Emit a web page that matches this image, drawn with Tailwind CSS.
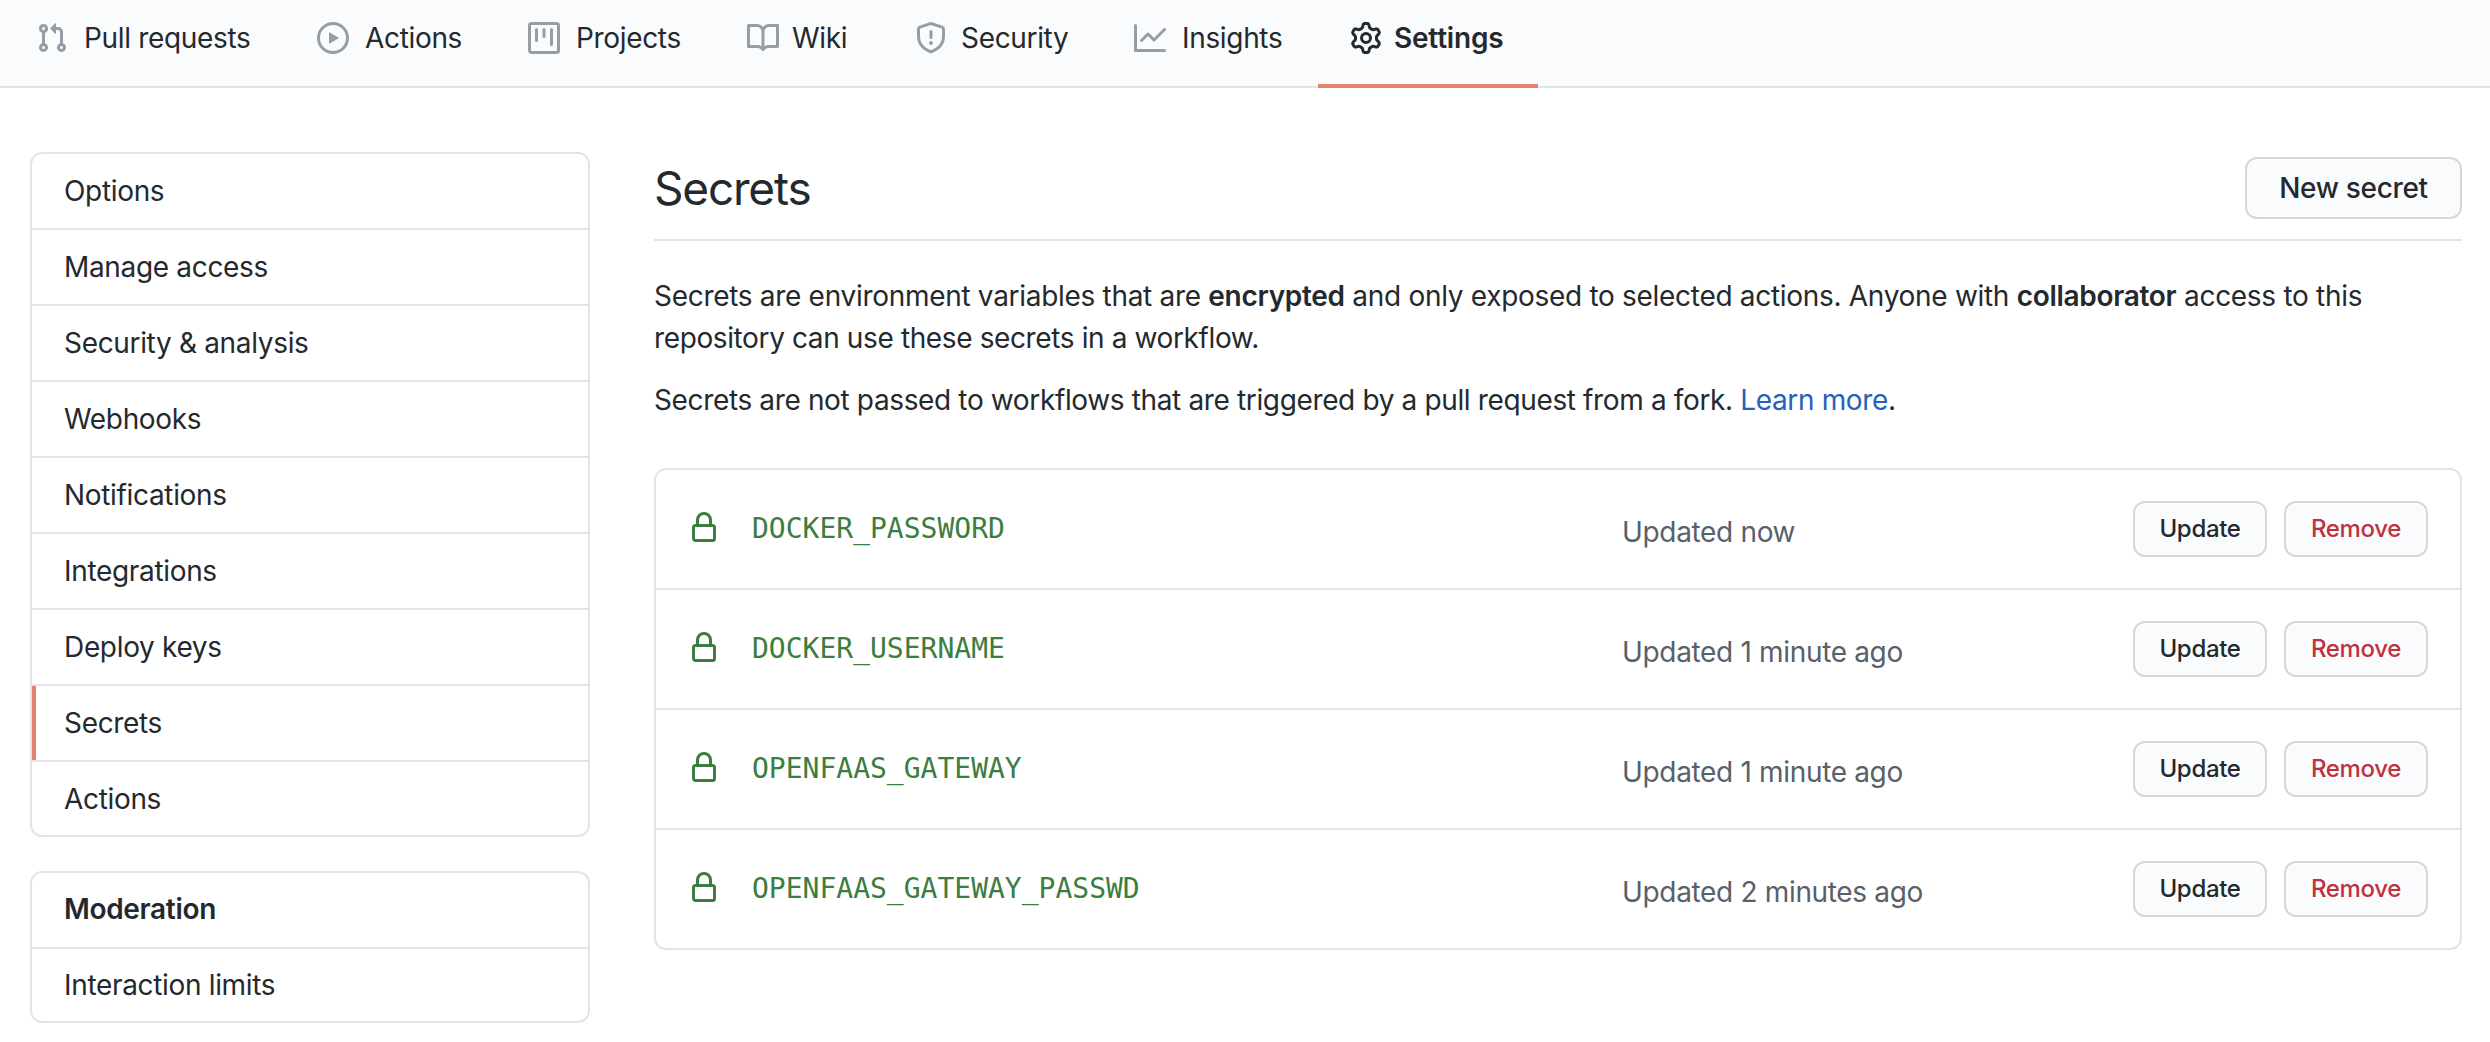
<!DOCTYPE html>
<html>
<head>
<meta charset="utf-8">
<script src="https://cdn.jsdelivr.net/npm/@tailwindcss/browser@4"></script>
</head>
<body class="bg-white font-['Inter','Noto_Sans',sans-serif] text-[#24292e] text-[28px] tracking-[-0.33px] overflow-hidden">
<div class="h-[1042px] w-[2490px] overflow-hidden">
  <nav class="h-[88px] bg-[#fafbfc] border-b-2 border-[#e1e4e8] flex items-start pl-[36px]">
    <a class="flex items-center gap-[16px] h-[76px] w-[281px] shrink-0"><svg width="32" height="32" viewBox="0 0 16 16" fill="#959da5"><path fill-rule="evenodd" d="M7.177 3.073L9.573.677A.25.25 0 0110 .854v4.792a.25.25 0 01-.427.177L7.177 3.427a.25.25 0 010-.354zM3.75 2.5a.75.75 0 100 1.5.75.75 0 000-1.5zm-2.25.75a2.25 2.25 0 113 2.122v5.256a2.251 2.251 0 11-1.5 0V5.372A2.25 2.25 0 011.5 3.25zM11 2.5h-1V4h1a1 1 0 011 1v5.628a2.251 2.251 0 101.5 0V5A2.5 2.5 0 0011 2.5zm1 10.25a.75.75 0 111.5 0 .75.75 0 01-1.5 0zM3.75 12a.75.75 0 100 1.5.75.75 0 000-1.5z"/></svg>Pull requests</a>
    <a class="flex items-center gap-[16px] h-[76px] w-[211px] shrink-0"><svg width="32" height="32" viewBox="0 0 16 16" fill="#959da5"><path fill-rule="evenodd" d="M1.5 8a6.5 6.5 0 1113 0 6.5 6.5 0 01-13 0zM8 0a8 8 0 100 16A8 8 0 008 0zM6.379 5.227A.25.25 0 006 5.442v5.117a.25.25 0 00.379.214l4.264-2.559a.25.25 0 000-.428L6.379 5.227z"/></svg>Actions</a>
    <a class="flex items-center gap-[16px] h-[76px] w-[219px] shrink-0"><svg width="32" height="32" viewBox="0 0 16 16" fill="#959da5"><path fill-rule="evenodd" d="M1.75 0A1.75 1.75 0 000 1.75v12.5C0 15.216.784 16 1.75 16h12.5A1.75 1.75 0 0016 14.25V1.75A1.75 1.75 0 0014.25 0H1.75zM1.5 1.75a.25.25 0 01.25-.25h12.5a.25.25 0 01.25.25v12.5a.25.25 0 01-.25.25H1.75a.25.25 0 01-.25-.25V1.75zM11.75 3a.75.75 0 00-.75.75v7.5a.75.75 0 001.5 0v-7.5a.75.75 0 00-.75-.75zm-8.25.75a.75.75 0 011.5 0v5.5a.75.75 0 01-1.5 0v-5.5zM8 3a.75.75 0 00-.75.75v3.5a.75.75 0 001.5 0v-3.5A.75.75 0 008 3z"/></svg>Projects</a>
    <a class="flex items-center gap-[13px] h-[76px] w-[168px] shrink-0"><svg width="32" height="32" viewBox="0 0 16 16" fill="#959da5"><path fill-rule="evenodd" d="M0 1.75A.75.75 0 01.75 1h4.253c1.227 0 2.317.59 3 1.501A3.744 3.744 0 0111.006 1h4.245a.75.75 0 01.75.75v10.5a.75.75 0 01-.75.75h-4.507a2.25 2.25 0 00-1.591.659l-.622.621a.75.75 0 01-1.06 0l-.622-.621A2.25 2.25 0 005.258 13H.75a.75.75 0 01-.75-.75V1.75zm8.755 3a2.25 2.25 0 012.25-2.25H14.5v9h-3.757c-.71 0-1.4.201-1.992.572l.004-7.322zm-1.504 7.324l.004-5.073-.002-2.253A2.25 2.25 0 005.003 2.5H1.5v9h3.757a3.75 3.75 0 011.994.574z"/></svg>Wiki</a>
    <a class="flex items-center gap-[14px] h-[76px] w-[219px] shrink-0"><svg width="32" height="32" viewBox="0 0 16 16" fill="#959da5"><path fill-rule="evenodd" d="M7.467.133a1.75 1.75 0 011.066 0l5.25 1.68A1.75 1.75 0 0115 3.48V7c0 1.566-.32 3.182-1.303 4.682-.983 1.498-2.585 2.813-5.032 3.855a1.7 1.7 0 01-1.33 0c-2.447-1.042-4.049-2.357-5.032-3.855C1.32 10.182 1 8.566 1 7V3.48a1.75 1.75 0 011.217-1.667l5.25-1.68zm.61 1.429a.25.25 0 00-.153 0l-5.25 1.68a.25.25 0 00-.174.238V7c0 1.358.275 2.666 1.057 3.86.784 1.194 2.121 2.34 4.366 3.297a.2.2 0 00.154 0c2.245-.956 3.582-2.104 4.366-3.298C13.225 9.666 13.5 8.36 13.5 7V3.48a.25.25 0 00-.174-.237l-5.25-1.68zM9 10.5a1 1 0 11-2 0 1 1 0 012 0zm-.25-5.75a.75.75 0 10-1.5 0v3a.75.75 0 001.5 0v-3z"/></svg>Security</a>
    <a class="flex items-center gap-[16px] h-[76px] w-[184px] shrink-0"><svg width="32" height="32" viewBox="0 0 16 16" fill="#959da5"><path fill-rule="evenodd" d="M1.5 1.75a.75.75 0 00-1.5 0v12.5c0 .414.336.75.75.75h14.5a.75.75 0 000-1.5H1.5V1.75zm14.28 2.53a.75.75 0 00-1.06-1.06L10 7.94 7.53 5.47a.75.75 0 00-1.06 0L3.22 8.72a.75.75 0 001.06 1.06L7 7.06l2.47 2.47a.75.75 0 001.06 0l5.25-5.25z"/></svg>Insights</a>
    <a class="flex items-center gap-[12px] h-[88px] w-[220px] shrink-0 pl-[32px] pb-[8px] font-semibold tracking-[-0.2px] border-b-4 border-[#e5816f]"><svg width="32" height="32" viewBox="0 0 16 16" fill="#24292e"><path fill-rule="evenodd" d="M7.429 1.525a6.593 6.593 0 011.142 0c.036.003.108.036.137.146l.289 1.105c.147.56.55.967.997 1.189.174.086.341.183.501.29.417.278.97.423 1.53.27l1.102-.303c.11-.03.175.016.195.046.219.31.41.641.573.989.014.031.022.11-.059.19l-.815.806c-.411.406-.562.957-.53 1.456a4.588 4.588 0 010 .582c-.032.499.119 1.05.53 1.456l.815.806c.08.08.073.159.059.19a6.494 6.494 0 01-.573.99c-.02.029-.086.074-.195.045l-1.103-.303c-.559-.153-1.112-.008-1.529.27-.16.107-.327.204-.5.29-.449.222-.851.628-.998 1.189l-.289 1.105c-.029.11-.101.143-.137.146a6.613 6.613 0 01-1.142 0c-.036-.003-.108-.037-.137-.146l-.289-1.105c-.147-.56-.55-.967-.997-1.189a4.502 4.502 0 01-.501-.29c-.417-.278-.97-.423-1.53-.27l-1.102.303c-.11.03-.175-.016-.195-.046a6.492 6.492 0 01-.573-.989c-.014-.031-.022-.11.059-.19l.815-.806c.411-.406.562-.957.53-1.456a4.587 4.587 0 010-.582c.032-.499-.119-1.05-.53-1.456l-.815-.806c-.08-.08-.073-.159-.059-.19a6.44 6.44 0 01.573-.99c.02-.029.086-.075.195-.045l1.103.303c.559.153 1.112.008 1.529-.27.16-.107.327-.204.5-.29.449-.222.851-.628.998-1.189l.289-1.105c.029-.11.101-.143.137-.146zM8 0c-.236 0-.47.01-.701.03-.743.065-1.29.615-1.458 1.261l-.29 1.106c-.017.066-.078.158-.211.224a5.994 5.994 0 00-.668.386c-.123.082-.233.09-.3.071L3.27 2.776c-.644-.177-1.392.02-1.82.63a7.977 7.977 0 00-.704 1.217c-.315.675-.111 1.422.363 1.891l.815.806c.05.048.098.147.088.294a6.084 6.084 0 000 .772c.01.147-.038.246-.088.294l-.815.806c-.474.469-.678 1.216-.363 1.891.2.428.436.835.704 1.218.428.609 1.176.806 1.82.63l1.103-.303c.066-.019.176-.011.299.071.213.143.436.272.668.386.133.066.194.158.212.224l.289 1.106c.169.646.715 1.196 1.458 1.26a8.094 8.094 0 001.402 0c.743-.064 1.29-.614 1.458-1.26l.29-1.106c.017-.066.078-.158.211-.224a5.98 5.98 0 00.668-.386c.123-.082.233-.09.3-.071l1.102.302c.644.177 1.392-.02 1.82-.63.268-.382.505-.789.704-1.217.315-.675.111-1.422-.364-1.891l-.814-.806c-.05-.048-.098-.147-.088-.294a6.1 6.1 0 000-.772c-.01-.147.039-.246.088-.294l.814-.806c.475-.469.679-1.216.364-1.891a7.992 7.992 0 00-.704-1.218c-.428-.609-1.176-.806-1.82-.63l-1.103.303c-.066.019-.176.011-.299-.071a5.991 5.991 0 00-.668-.386c-.133-.066-.194-.158-.212-.224L10.16 1.29C9.99.645 9.444.095 8.701.031A8.094 8.094 0 008 0zm1.5 8a1.5 1.5 0 11-3 0 1.5 1.5 0 013 0zM11 8a3 3 0 11-6 0 3 3 0 016 0z"/></svg>Settings</a>
  </nav>

  <div class="flex items-start pl-[30px] pr-[28px] pt-[64px] gap-[64px]">
    <aside class="w-[560px] shrink-0 flex flex-col gap-[34px]">
      <div class="border-2 border-[#e1e4e8] rounded-[12px] overflow-hidden flex flex-col">
        <a class="h-[74px] flex items-center px-[32px]">Options</a>
        <a class="h-[76px] flex items-center px-[32px] border-t-2 border-[#e1e4e8]">Manage access</a>
        <a class="h-[76px] flex items-center px-[32px] border-t-2 border-[#e1e4e8]">Security &amp; analysis</a>
        <a class="h-[76px] flex items-center px-[32px] border-t-2 border-[#e1e4e8]">Webhooks</a>
        <a class="h-[76px] flex items-center px-[32px] border-t-2 border-[#e1e4e8]">Notifications</a>
        <a class="h-[76px] flex items-center px-[32px] border-t-2 border-[#e1e4e8]">Integrations</a>
        <a class="h-[76px] flex items-center px-[32px] border-t-2 border-[#e1e4e8]">Deploy keys</a>
        <div class="border-t-2 border-[#e1e4e8]"><a class="h-[74px] flex items-center pl-[28px] pr-[32px] border-l-4 border-[#e5816f]">Secrets</a></div>
        <a class="h-[75px] flex items-center px-[32px] border-t-2 border-[#e1e4e8]">Actions</a>
      </div>
      <div class="border-2 border-[#e1e4e8] rounded-[12px] overflow-hidden flex flex-col">
        <div class="h-[74px] flex items-center px-[32px] pb-[2px] font-semibold">Moderation</div>
        <a class="h-[74px] flex items-center px-[32px] border-t-2 border-[#e1e4e8]">Interaction limits</a>
      </div>
    </aside>

    <main class="w-[1808px] shrink-0">
      <div class="flex items-center justify-between border-b-2 border-[#e1e4e8] pt-[7px] pb-[20px] -mt-[2px]">
        <h2 class="text-[46px] font-normal leading-none tracking-[-1.2px]">Secrets</h2>
        <button class="h-[62px] w-[217px] rounded-[12px] border-2 border-[#d5d8da] bg-[#fafbfc] font-medium">New secret</button>
      </div>
      <p class="mt-[34px] leading-[42px] tracking-[-0.3px]">Secrets are environment variables that are <b class="font-semibold">encrypted</b> and only exposed to selected actions. Anyone with <b class="font-semibold">collaborator</b> access to this<br><span class="tracking-[-0.38px]">repository can use these secrets in a workflow.</span></p>
      <p class="mt-[20px] leading-[42px] tracking-[-0.36px]">Secrets are not passed to workflows that are triggered by a pull request from a fork. <a class="text-[#2560bb]">Learn more</a>.</p>

      <div class="mt-[47px] border-2 border-[#e1e4e8] rounded-[12px] flex flex-col">
        <div class="h-[118px] flex items-center pl-[32px] pr-[32px]">
          <svg class="shrink-0 -mt-[2px]" width="32" height="32" viewBox="0 0 16 16" fill="#3c7d40"><path fill-rule="evenodd" d="M4 4v2h-.25A1.75 1.75 0 002 7.75v5.5c0 .966.784 1.75 1.75 1.75h8.5A1.75 1.75 0 0014 13.25v-5.5A1.75 1.75 0 0012.25 6H12V4a4 4 0 10-8 0zm6.5 2V4a2.5 2.5 0 00-5 0v2h5zM12 7.5h.25a.25.25 0 01.25.25v5.5a.25.25 0 01-.25.25h-8.5a.25.25 0 01-.25-.25v-5.5a.25.25 0 01.25-.25H12z"/></svg>
          <span class="ml-[32px] w-[870px] font-['DejaVu_Sans_Mono',monospace] tracking-normal text-[#3c7d40]">DOCKER_PASSWORD</span>
          <span class="text-[#586069] mt-[6px]">Updated now</span>
          <button class="ml-auto h-[56px] w-[134px] rounded-[12px] border-2 border-[#d5d8da] bg-[#fafbfc] font-medium text-[24px]">Update</button>
          <button class="ml-[17px] h-[56px] w-[144px] rounded-[12px] border-2 border-[#d5d8da] bg-[#fafbfc] font-medium text-[24px] text-[#bf3040]">Remove</button>
        </div>
        <div class="h-[120px] flex items-center pl-[32px] pr-[32px] border-t-2 border-[#e1e4e8]">
          <svg class="shrink-0 -mt-[2px]" width="32" height="32" viewBox="0 0 16 16" fill="#3c7d40"><path fill-rule="evenodd" d="M4 4v2h-.25A1.75 1.75 0 002 7.75v5.5c0 .966.784 1.75 1.75 1.75h8.5A1.75 1.75 0 0014 13.25v-5.5A1.75 1.75 0 0012.25 6H12V4a4 4 0 10-8 0zm6.5 2V4a2.5 2.5 0 00-5 0v2h5zM12 7.5h.25a.25.25 0 01.25.25v5.5a.25.25 0 01-.25.25h-8.5a.25.25 0 01-.25-.25v-5.5a.25.25 0 01.25-.25H12z"/></svg>
          <span class="ml-[32px] w-[870px] font-['DejaVu_Sans_Mono',monospace] tracking-normal text-[#3c7d40]">DOCKER_USERNAME</span>
          <span class="text-[#586069] mt-[6px]">Updated 1 minute ago</span>
          <button class="ml-auto h-[56px] w-[134px] rounded-[12px] border-2 border-[#d5d8da] bg-[#fafbfc] font-medium text-[24px]">Update</button>
          <button class="ml-[17px] h-[56px] w-[144px] rounded-[12px] border-2 border-[#d5d8da] bg-[#fafbfc] font-medium text-[24px] text-[#bf3040]">Remove</button>
        </div>
        <div class="h-[120px] flex items-center pl-[32px] pr-[32px] border-t-2 border-[#e1e4e8]">
          <svg class="shrink-0 -mt-[2px]" width="32" height="32" viewBox="0 0 16 16" fill="#3c7d40"><path fill-rule="evenodd" d="M4 4v2h-.25A1.75 1.75 0 002 7.75v5.5c0 .966.784 1.75 1.75 1.75h8.5A1.75 1.75 0 0014 13.25v-5.5A1.75 1.75 0 0012.25 6H12V4a4 4 0 10-8 0zm6.5 2V4a2.5 2.5 0 00-5 0v2h5zM12 7.5h.25a.25.25 0 01.25.25v5.5a.25.25 0 01-.25.25h-8.5a.25.25 0 01-.25-.25v-5.5a.25.25 0 01.25-.25H12z"/></svg>
          <span class="ml-[32px] w-[870px] font-['DejaVu_Sans_Mono',monospace] tracking-normal text-[#3c7d40]">OPENFAAS_GATEWAY</span>
          <span class="text-[#586069] mt-[6px]">Updated 1 minute ago</span>
          <button class="ml-auto h-[56px] w-[134px] rounded-[12px] border-2 border-[#d5d8da] bg-[#fafbfc] font-medium text-[24px]">Update</button>
          <button class="ml-[17px] h-[56px] w-[144px] rounded-[12px] border-2 border-[#d5d8da] bg-[#fafbfc] font-medium text-[24px] text-[#bf3040]">Remove</button>
        </div>
        <div class="h-[120px] flex items-center pl-[32px] pr-[32px] border-t-2 border-[#e1e4e8]">
          <svg class="shrink-0 -mt-[2px]" width="32" height="32" viewBox="0 0 16 16" fill="#3c7d40"><path fill-rule="evenodd" d="M4 4v2h-.25A1.75 1.75 0 002 7.75v5.5c0 .966.784 1.75 1.75 1.75h8.5A1.75 1.75 0 0014 13.25v-5.5A1.75 1.75 0 0012.25 6H12V4a4 4 0 10-8 0zm6.5 2V4a2.5 2.5 0 00-5 0v2h5zM12 7.5h.25a.25.25 0 01.25.25v5.5a.25.25 0 01-.25.25h-8.5a.25.25 0 01-.25-.25v-5.5a.25.25 0 01.25-.25H12z"/></svg>
          <span class="ml-[32px] w-[870px] font-['DejaVu_Sans_Mono',monospace] tracking-normal text-[#3c7d40]">OPENFAAS_GATEWAY_PASSWD</span>
          <span class="text-[#586069] mt-[6px]">Updated 2 minutes ago</span>
          <button class="ml-auto h-[56px] w-[134px] rounded-[12px] border-2 border-[#d5d8da] bg-[#fafbfc] font-medium text-[24px]">Update</button>
          <button class="ml-[17px] h-[56px] w-[144px] rounded-[12px] border-2 border-[#d5d8da] bg-[#fafbfc] font-medium text-[24px] text-[#bf3040]">Remove</button>
        </div>
      </div>
    </main>
  </div>
</div>
</body>
</html>
